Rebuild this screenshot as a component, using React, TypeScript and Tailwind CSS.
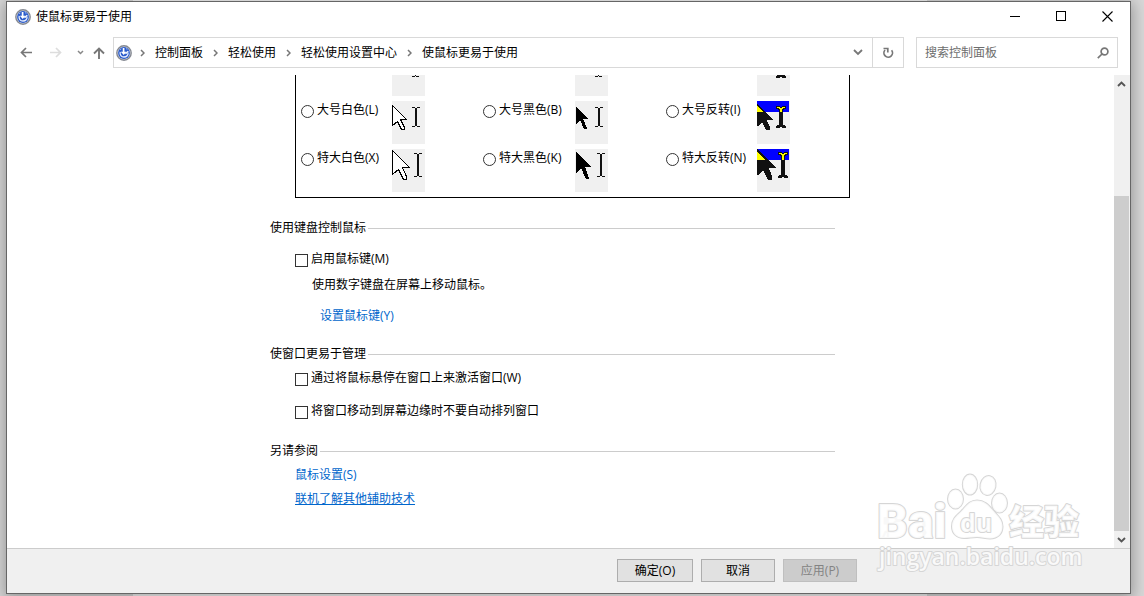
import type { ReactNode } from "react";

type Tone = "white" | "black" | "inverted";
type Scale = "small" | "large" | "huge";

const ARROWS: Record<Scale, string> = {
  small: "0.5,2.5 10.5,12.5 6.5,12.5 9.5,18.5 7.5,19.5 4.5,13.5 0.5,16.5",
  large: "0.5,4.5 14.5,18.5 8.5,18.5 12.5,26.5 12.5,28.5 9.5,28.5 5.5,20.5 0.5,24.5",
  huge: "0.5,1.5 17.5,18.5 10.5,18.5 14.5,27.5 14.5,30.5 11.5,30.5 6.5,20.5 0.5,25.5",
};

const SOLID_ARROWS: Record<Scale, string> = {
  small: "1,3 10,12 6,12 9,19 7,19 4,13 1,16",
  large: "1,6 13,18 8,18 12,27 12,28 9,28 5,19 1,23",
  huge: "1,3 16,18 10,18 14,29 14,30 11,30 6,19 1,24",
};

const BEAMS: Record<Scale, { x: number; top: number; bottom: number }> = {
  small: { x: 23, top: 8, bottom: 24 },
  large: { x: 23, top: 6, bottom: 26 },
  huge: { x: 25, top: 4, bottom: 28 },
};

function Beam({ x, top, bottom, heavy }: { x: number; top: number; bottom: number; heavy: boolean }) {
  const w = heavy ? 2 : 1;
  return (
    <g fill="#111">
      <rect x={x - 3} y={top} width="3" height="1" />
      <rect x={x + w} y={top} width="3" height="1" />
      <rect x={x} y={top + 1} width={w} height={bottom - top - 2} />
      <rect x={x - 3} y={bottom - 1} width="3" height="1" />
      <rect x={x + w} y={bottom - 1} width="3" height="1" />
    </g>
  );
}

function InvertedCursor({ scale }: { scale: Scale }) {
  const x = scale === "huge" ? 26 : 24;
  const { top, bottom } = BEAMS[scale];
  const tip = scale === "huge" ? 2 : 4;
  return (
    <>
      <rect width="32" height="11" fill="#00f" />
      <polygon points={ARROWS[scale]} fill="#111" stroke="#111" strokeWidth="1.5" />
      <polygon points={`0,${tip + 1} ${10 - tip},11 0,11`} fill="#ff0" />
      <g fill="#111">
        <rect x={x - 5} y={top - 1} width="4" height="3" />
        <rect x={x + 1} y={top - 1} width="4" height="3" />
        <rect x={x - 3} y={top} width="6" height="3" />
        <rect x={x - 2} y={top + 2} width="4" height={bottom - top - 2} />
        <rect x={x - 4} y={bottom - 2} width="8" height="2" />
        <rect x={x - 5} y={bottom - 1} width="4" height="2" />
        <rect x={x + 1} y={bottom - 1} width="4" height="2" />
      </g>
      {scale !== "small" && (
        <g fill="#ff0">
          <rect x={x - 4} y={top} width="3" height="1" />
          <rect x={x + 1} y={top} width="3" height="1" />
          <rect x={x - 2} y={top + 1} width="4" height="1" />
          <rect x={x - 1} y={top + 2} width="2" height={9 - top} />
        </g>
      )}
    </>
  );
}

function CursorPreview({ tone, scale }: { tone: Tone; scale: Scale }) {
  return (
    <svg
      className="block shrink-0 bg-[#f0f0f0]"
      width="33"
      height="43"
      viewBox="0 0 33 43"
      shapeRendering="crispEdges"
      aria-hidden="true"
    >
      {tone === "white" && (
        <>
          <polygon points={ARROWS[scale]} fill="#fff" stroke="#000" />
          <Beam {...BEAMS[scale]} heavy={scale !== "small"} />
        </>
      )}
      {tone === "black" && (
        <>
          <polygon points={SOLID_ARROWS[scale]} fill="#000" />
          <Beam {...BEAMS[scale]} heavy={scale !== "small"} />
        </>
      )}
      {tone === "inverted" && <InvertedCursor scale={scale} />}
    </svg>
  );
}

function SectionTitle({ children }: { children: ReactNode }) {
  return (
    <h2 className="mr-4 flex items-center gap-0.5 leading-5">
      {children}
      <span className="h-px flex-1 bg-[#ccc]" />
    </h2>
  );
}

function Check({ children }: { children: ReactNode }) {
  return (
    <label className="flex items-start gap-[3px] leading-5">
      <input
        type="checkbox"
        className="mt-[5px] size-[13px] shrink-0 appearance-none border border-[#333] bg-white checked:bg-[#333]"
      />
      {children}
    </label>
  );
}

function EaseIcon() {
  return (
    <svg width="16" height="16" viewBox="0 0 16 16" aria-hidden="true" className="shrink-0">
      <circle cx="8" cy="8" r="7.2" fill="#d5d8de" stroke="#858992" strokeWidth="1.4" />
      <circle cx="8" cy="8" r="5.9" fill="#2a5bcb" />
      <path d="M4.200 6.800C3.600 9.800 5.300 12 8 12s4.300-2 4-4.400" fill="none" stroke="#e6eeff" strokeWidth="1.300" />
      <path d="M7.600 3v4.500" fill="none" stroke="#fff" strokeWidth="1.700" />
      <path d="M4.800 6.800h5.800L7.700 10z" fill="#fff" />
      <path d="M9.500 8.800l2.800-2.600" stroke="#fff" strokeWidth="1.300" />
      <path d="M4.200 5l1-1.200M10 3.500l1.400 1" stroke="#9db9f2" strokeWidth="1" />
    </svg>
  );
}

function Chevron() {
  return (
    <svg width="5" height="8" viewBox="0 0 5 8" fill="none" stroke="#777" strokeWidth="1.5" aria-hidden="true" className="shrink-0">
      <path d="M1 1l3 3-3 3" />
    </svg>
  );
}

function NavButton({ label, width, children }: { label: string; width: string; children: ReactNode }) {
  return (
    <button aria-label={label} className={`flex h-6 shrink-0 items-center justify-center ${width}`}>
      {children}
    </button>
  );
}

function TitleBar() {
  const control = "flex h-[29px] w-[46px] items-center justify-center hover:bg-[#e5e5e5]";
  return (
    <header className="flex h-[35px] items-start">
      <div className="flex h-[29px] flex-1 items-center gap-[5px] pl-2">
        <EaseIcon />
        <h1>使鼠标更易于使用</h1>
      </div>
      <button aria-label="最小化" className={control}>
        <svg width="10" height="11" shapeRendering="crispEdges"><path d="M0 5.5h10" stroke="#000" /></svg>
      </button>
      <button aria-label="最大化" className={control}>
        <svg width="11" height="11" shapeRendering="crispEdges"><path d="M.5.5h9v9h-9z" fill="none" stroke="#000" /></svg>
      </button>
      <button aria-label="关闭" className={control}>
        <svg width="11" height="11"><path d="M.5.5l10 10M10.500.5l-10 10" stroke="#000" strokeWidth="1.1" /></svg>
      </button>
    </header>
  );
}

const TRAIL = ["控制面板", "轻松使用", "轻松使用设置中心", "使鼠标更易于使用"];

function NavBar() {
  return (
    <div className="mb-[7px] flex h-[31px] shrink-0 items-center pr-3">
      <nav className="flex w-[106px] shrink-0 items-center pl-2">
        <NavButton label="后退" width="w-[22px]">
          <svg width="12" height="11" fill="none" stroke="#777" strokeWidth="1.7"><path d="M12 5.500H1.500M6 1L1.500 5.500 6 10" /></svg>
        </NavButton>
        <NavButton label="前进" width="w-[38px]">
          <svg width="12" height="11" fill="none" stroke="#ddd" strokeWidth="1.7"><path d="M0 5.500h10.500M6 1l4.500 4.500L6 10" /></svg>
        </NavButton>
        <NavButton label="最近位置" width="w-2.5">
          <svg width="7" height="5" fill="none" stroke="#888" strokeWidth="1.5"><path d="M1 1l2.500 2.500L6 1" /></svg>
        </NavButton>
        <NavButton label="上移" width="w-7">
          <svg width="12" height="12" fill="none" stroke="#777" strokeWidth="1.9"><path d="M6 12V1.500M1 6.500l5-5 5 5" /></svg>
        </NavButton>
      </nav>
      <div className="flex h-full flex-1 items-center border border-[#d9d9d9]">
        <span className="mr-2 pl-0.5"><EaseIcon /></span>
        <ol className="flex flex-1 items-center gap-2.5">
          {TRAIL.map((name) => (
            <li key={name} className="flex items-center gap-2.5 whitespace-nowrap">
              <Chevron />
              <a href="#trail">{name}</a>
            </li>
          ))}
        </ol>
        <button aria-label="展开" className="flex h-full w-7 items-center justify-center">
          <svg width="10" height="7" fill="none" stroke="#777" strokeWidth="1.8"><path d="M1 1l4 4 4-4" /></svg>
        </button>
        <button aria-label="刷新" className="flex h-full w-[31px] items-center justify-center border-l border-[#d9d9d9]">
          <svg width="12" height="12" fill="none" stroke="#777" strokeWidth="1.7">
            <path d="M9.600 3.200A4.300 4.300 0 1 1 3 3" />
            <path d="M1.500 1.500h4.300v4" />
          </svg>
        </button>
      </div>
      <div className="ml-3 flex h-full w-[202px] shrink-0 items-center border border-[#d9d9d9] pl-2 pr-2">
        <input
          type="text"
          aria-label="搜索控制面板"
          placeholder="搜索控制面板"
          className="h-full min-w-0 flex-1 bg-transparent outline-none placeholder:text-[#6d6d6d]"
        />
        <svg width="12" height="12" fill="none" stroke="#777" strokeWidth="1.7" aria-hidden="true">
          <circle cx="7.500" cy="4.500" r="3.400" />
          <path d="M5 7L.800 11.200" />
        </svg>
      </div>
    </div>
  );
}

function ScrollBar() {
  return (
    <div className="flex w-4 shrink-0 flex-col bg-[#f0f0f0]">
      <button aria-label="向上滚动" className="flex h-[17px] items-center justify-center pr-0.5">
        <svg width="9" height="6" fill="none" stroke="#555" strokeWidth="1.900"><path d="M1 5l3.500-3.500L8 5" /></svg>
      </button>
      <div className="flex flex-1 flex-col justify-end pr-px">
        <div className="h-[76.3%] bg-[#cdcdcd]" />
      </div>
      <button aria-label="向下滚动" className="flex h-[17px] items-center justify-center pr-0.5">
        <svg width="9" height="6" fill="none" stroke="#555" strokeWidth="1.900"><path d="M1 1l3.500 3.500L8 1" /></svg>
      </button>
    </div>
  );
}

function ChoiceRow({ scale, labels }: { scale: Scale; labels: [string, string, string] }) {
  const tones: Tone[] = ["white", "black", "inverted"];
  const cells = [
    "grid grid-cols-[91px_1fr]",
    "grid grid-cols-[92px_1fr]",
    "grid grid-cols-[91px_1fr]",
  ];
  return (
    <>
      {labels.map((label, i) => (
        <label key={label} className={cells[i]}>
          <span className="flex items-start gap-[3px]">
            <input
              type="radio"
              name="pointer"
              className="mt-1 size-[13px] shrink-0 appearance-none rounded-full border border-[#333] bg-white checked:border-4"
            />
            <span className="whitespace-nowrap leading-[18px]">{label}</span>
          </span>
          <CursorPreview tone={tones[i]} scale={scale} />
        </label>
      ))}
    </>
  );
}

function PointerOptions() {
  return (
    <div className="ml-[25px] mr-px overflow-hidden border-x border-b border-black pb-[5px] pl-[5px]">
      <div className="-mt-[22px] grid grid-cols-[182px_183px_1fr] gap-y-[5px]">
        <div className="pl-[91px]"><CursorPreview tone="white" scale="small" /></div>
        <div className="pl-[92px]"><CursorPreview tone="black" scale="small" /></div>
        <div className="pl-[91px]"><CursorPreview tone="inverted" scale="small" /></div>
        <ChoiceRow scale="large" labels={["大号白色(L)", "大号黑色(B)", "大号反转(I)"]} />
        <ChoiceRow scale="huge" labels={["特大白色(X)", "特大黑色(K)", "特大反转(N)"]} />
      </div>
    </div>
  );
}

function Watermark() {
  return (
    <svg
      className="pointer-events-none absolute bottom-4 right-[58px]"
      width="214"
      height="110"
      viewBox="872 470 214 110"
      aria-hidden="true"
      fill="#fff"
      fillOpacity="0.85"
      stroke="#d6d6d6"
      strokeWidth="2"
      paintOrder="stroke"
      strokeLinejoin="round"
    >
      <ellipse cx="955.500" cy="499" rx="7.500" ry="9.500" />
      <ellipse cx="970" cy="484.500" rx="7.200" ry="10" />
      <ellipse cx="988" cy="485.500" rx="7.500" ry="9.500" transform="rotate(12 988 485.500)" />
      <ellipse cx="999.500" cy="503" rx="7.500" ry="9.500" />
      <path d="M977 500.500c-8 0-11 6-16 11-5 4.500-9 8-9 15 0 7 5 11.500 12 11.500 5 0 8-1 13-1s8 1.500 13 1.500c8 0 12.500-5 12.500-12 0-6.500-4-10-8-14.500-5-5.500-9-11.500-17.500-11.500z" />
      <text x="877" y="538" fontFamily="Roboto, sans-serif" fontWeight="900" fontSize="48">Bai</text>
      <text x="960" y="532" fontFamily="'Open Sans', sans-serif" fontWeight="700" fontSize="25">du</text>
      <text x="1009" y="535" fontFamily="'Noto Sans CJK SC', sans-serif" fontWeight="900" fontSize="35">经验</text>
      <text x="879" y="565" fontFamily="'Open Sans', sans-serif" fontWeight="600" fontSize="23">jingyan.baidu.com</text>
    </svg>
  );
}

export default function App() {
  return (
    <div className="relative flex h-screen overflow-hidden bg-[#d8d8d8] pb-0.5 pl-1.5 pr-[13px] pt-px font-['Open_Sans','Noto_Sans_CJK_SC',sans-serif] text-xs text-black">
      <div className="absolute inset-y-0 left-[133px] right-[217px] bg-[#f4f4f4]" />
      <div className="relative flex min-w-0 flex-1 flex-col border border-[#666] bg-white shadow-[0_3px_14px_2px_rgba(0,0,0,0.3)]">
        <TitleBar />
        <NavBar />
        <div className="flex min-h-0 flex-1">
          <main className="min-w-0 flex-1 overflow-hidden">
            <div className="mx-auto w-full max-w-[581px]">
              <PointerOptions />

              <section className="mt-5">
                <SectionTitle>使用键盘控制鼠标</SectionTitle>
                <div className="mt-[11px] pl-[25px]">
                  <Check>启用鼠标键(M)</Check>
                  <p className="mt-1.5 pl-[17px] leading-5">使用数字键盘在屏幕上移动鼠标。</p>
                  <p className="mt-[11px] pl-[25px] leading-5">
                    <a href="#mouse-keys" className="text-[#0066cc]">设置鼠标键(Y)</a>
                  </p>
                </div>
              </section>

              <section className="mt-[18px]">
                <SectionTitle>使窗口更易于管理</SectionTitle>
                <div className="mt-1 flex flex-col gap-[13px] pl-[25px]">
                  <Check>通过将鼠标悬停在窗口上来激活窗口(W)</Check>
                  <Check>将窗口移动到屏幕边缘时不要自动排列窗口</Check>
                </div>
              </section>

              <section className="mt-5">
                <SectionTitle>另请参阅</SectionTitle>
                <div className="mt-1 flex flex-col items-start gap-1 pl-[25px] leading-5 text-[#0066cc]">
                  <a href="#mouse-settings">鼠标设置(S)</a>
                  <a href="#assistive" className="underline">联机了解其他辅助技术</a>
                </div>
              </section>
            </div>
          </main>
          <ScrollBar />
        </div>
        <footer className="flex h-[45px] shrink-0 items-start justify-end gap-2 border-t border-[#ccc] bg-[#f0f0f0] pr-[273px] pt-2.5">
          <button className="h-[23px] w-[76px] border border-[#adadad] bg-[#e1e1e1]">确定(O)</button>
          <button className="h-[23px] w-[74px] border border-[#adadad] bg-[#e1e1e1]">取消</button>
          <button disabled className="h-[23px] w-[74px] border border-[#bfbfbf] bg-[#ccc] text-[#838383]">应用(P)</button>
        </footer>
      </div>
      <Watermark />
    </div>
  );
}
